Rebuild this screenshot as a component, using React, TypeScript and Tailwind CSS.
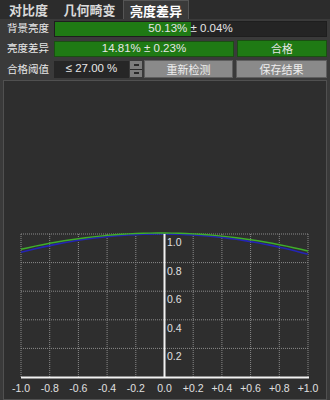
import React from "react";

const cjk = { fontFamily: '"Noto Sans CJK SC", "Noto Sans", sans-serif' };
const num = { fontFamily: '"Liberation Sans", "Noto Sans CJK SC", sans-serif' };

const X0 = 21;
const X1 = 308;
const YB = 378;
const YT = 235;
const step = (X1 - X0) / 10;
const ystep = (YB - YT) / 5;

function curve(k: number, tilt: number) {
  const pts: string[] = [];
  for (let i = 0; i <= 40; i++) {
    const t = -1 + i / 20;
    const v = Math.min(1, 1 - k * t * t - tilt * t);
    const x = X0 + ((t + 1) / 2) * (X1 - X0);
    const y = YB - v * (YB - YT);
    pts.push(`${x.toFixed(1)},${y.toFixed(1)}`);
  }
  return pts.join(" ");
}

function Chart() {
  const xl = ["-1.0", "-0.8", "-0.6", "-0.4", "-0.2", "0.0", "+0.2", "+0.4", "+0.6", "+0.8", "+1.0"];
  const yl = ["1.0", "0.8", "0.6", "0.4", "0.2"];
  return (
    <svg width="322" height="318" className="block">
      <g transform="translate(-4,-82)">
        {xl.map((_, i) => (
          <line key={"v" + i} x1={X0 + i * step} y1={YT} x2={X0 + i * step} y2={YB} stroke="#8a8a8a" strokeWidth="1" strokeDasharray="1 1" />
        ))}
        {[1, 2, 3, 4, 5].map((j) => (
          <line key={"h" + j} x1={X0} y1={YB - j * ystep} x2={X1} y2={YB - j * ystep} stroke="#8a8a8a" strokeWidth="1" strokeDasharray="1 1" />
        ))}
        <polyline points={curve(0.135, 0.007)} fill="none" stroke="#2424b4" strokeWidth="1.6" />
        <polyline points={curve(0.12, 0.006)} fill="none" stroke="#3fae2a" strokeWidth="1.4" transform="translate(0,-1)" />
        <line x1={164.5} y1={YT} x2={164.5} y2={YB} stroke="#f2f2f2" strokeWidth="2" />
        <line x1={X0} y1={YB + 0.5} x2={X1 + 1} y2={YB + 0.5} stroke="#f2f2f2" strokeWidth="2" />
        {yl.map((l, j) => (
          <text key={l} x={167} y={YT + j * ystep + 12} fontSize="10.5" fill="#e0e0e0" style={num}>
            {l}
          </text>
        ))}
        {xl.map((l, i) => (
          <text key={l} x={X0 + i * step} y={393} fontSize="10.5" fill="#e0e0e0" textAnchor="middle" style={num}>
            {l}
          </text>
        ))}
      </g>
    </svg>
  );
}

export default function App() {
  return (
    <div className="w-[330px] h-[400px] bg-[#3a3a3a] flex flex-col overflow-hidden text-[#e6e6e6]" style={cjk}>
      <div className="h-[21px] bg-[#2c2c2c] flex items-end text-[13px] font-bold leading-none">
        <div className="w-[57px] h-[19px] flex items-center justify-center text-[#d8d8d8]">对比度</div>
        <div className="w-[65px] h-[19px] flex items-center justify-center text-[#d8d8d8]">几何畸变</div>
        <div className="ml-[1px] w-[66px] h-[19px] flex items-center justify-center bg-[#3a3a3a] border-t border-x border-[#555] text-white">
          亮度差异
        </div>
      </div>

      <div className="flex flex-col gap-[3px] pt-[1px] px-[3px] text-[10.5px] leading-none">
        <div className="flex items-center h-[17px]">
          <div className="w-[51px] pl-[4px]">背景亮度</div>
          <div className="relative flex-1 h-[16px] bg-[#242424] border border-[#1e1e1e]">
            <div className="h-full w-[50%] bg-[#1f7a14]" />
            <div className="absolute inset-0 flex items-center justify-center text-[11.5px] text-[#e6e6e6]" style={num}>
              50.13% ± 0.04%
            </div>
          </div>
        </div>

        <div className="flex items-center h-[17px]">
          <div className="w-[51px] pl-[4px]">亮度差异</div>
          <div className="w-[180px] h-[16px] bg-[#1f7a14] border border-[#1a4f12] flex items-center justify-center text-[11.5px]" style={num}>
            14.81% ± 0.23%
          </div>
          <div className="ml-[3px] flex-1 h-[17px] bg-[#1f7a14] border border-[#1a4f12] flex items-center justify-center text-[11px]">
            合格
          </div>
        </div>

        <div className="flex items-center h-[18px]">
          <div className="w-[51px] pl-[4px]">合格阈值</div>
          <div className="w-[75px] h-[17px] bg-[#262626] flex items-center justify-center text-[11.5px]" style={num}>
            ≤ 27.00 %
          </div>
          <div className="ml-[1px] w-[12px] h-[16px] flex flex-col gap-[1px] bg-[#2a2a2a]">
            <div className="flex-1 bg-[#7d7d7d] flex items-center justify-center">
              <div className="w-[5px] h-[2px] bg-[#2a2a2a]" />
            </div>
            <div className="flex-1 bg-[#7d7d7d] flex items-center justify-center">
              <div className="w-[5px] h-[2px] bg-[#2a2a2a]" />
            </div>
          </div>
          <div className="ml-[2px] w-[89px] h-[18px] bg-[#8a8a8a] border border-[#5e5e5e] flex items-center justify-center text-[11px] text-[#eeeeee]">
            重新检测
          </div>
          <div className="ml-[3px] flex-1 h-[18px] bg-[#8a8a8a] border border-[#5e5e5e] flex items-center justify-center text-[11px] text-[#eeeeee]">
            保存结果
          </div>
        </div>
      </div>

      <div className="mt-[2px] mx-[3px] flex-1 bg-[#2e2e2e] border border-[#505050]">
        <Chart />
      </div>
    </div>
  );
}
